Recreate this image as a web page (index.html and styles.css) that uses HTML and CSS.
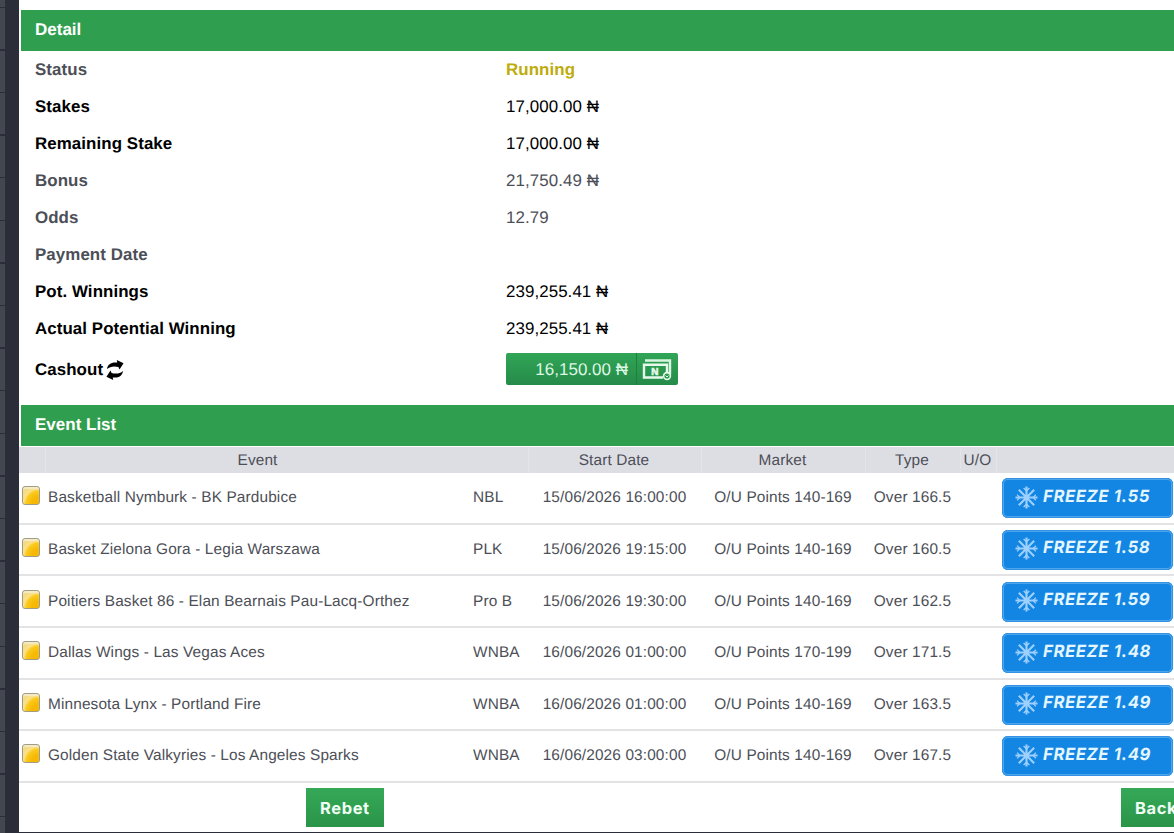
FILE: index.html
```html
<!DOCTYPE html>
<html lang="en">
<head>
    <meta charset="UTF-8">
    <meta name="viewport" content="width=device-width, initial-scale=1.0">
    <link rel="stylesheet" href="styles.css">
    <title>Coupon Detail</title>
</head>
<body>
    <svg class="symbols">
      <symbol id="snow" viewBox="0 0 24 24">
        <g fill="none" stroke="#9dd0ff" stroke-width="2.200">
          <path d="M12 .5v23M.5 12h23M4 4l16 16M20 4L4 20"/>
          <path d="M9 2.200L12 5l3-2.800M9 21.800L12 19l3 2.800M2.200 9L5 12l-2.800 3M21.800 9L19 12l2.800 3" stroke-width="1.400"/>
        </g>
      </symbol>
    </svg>

    <div class="page">
      <div class="gutter"></div>
      <div class="coupon">

        <div class="bar">Detail</div>
        <div class="details">
          <div class="detail muted"><b>Status</b><span class="running">Running</span></div>
          <div class="detail"><b>Stakes</b><span>17,000.00 ₦</span></div>
          <div class="detail"><b>Remaining Stake</b><span>17,000.00 ₦</span></div>
          <div class="detail muted"><b>Bonus</b><span>21,750.49 ₦</span></div>
          <div class="detail muted"><b>Odds</b><span>12.79</span></div>
          <div class="detail muted"><b>Payment Date</b><span></span></div>
          <div class="detail"><b>Pot. Winnings</b><span>239,255.41 ₦</span></div>
          <div class="detail"><b>Actual Potential Winning</b><span>239,255.41 ₦</span></div>
          <div class="detail cashout-row">
            <b>Cashout<svg class="refresh" viewBox="0 0 20 22">
              <path d="M1 10C2 4.500 6 2 12.500 2.800L12 0l7.500 3.500-4.500 7-1.200-2.800C9 6.500 4.500 7 1 10z"/>
              <path d="M19 12c-1 5.500-5 8-11.500 7.200l.5 2.800-7.500-3.500 4.500-7 1.200 2.800C11 15.500 15.500 15 19 12z"/>
            </svg></b>
            <button class="cashout">
              <span class="amount">16,150.00 ₦</span>
              <span class="note">
                <svg width="30" height="23" viewBox="0 0 30 23">
                  <path d="M3 2.500h25v14" fill="none" stroke="#d9f5e1" stroke-width="2.400"/>
                  <path d="M21 19.500H2V6.800h23v8" fill="none" stroke="#e6faec" stroke-width="2.400"/>
                  <text x="9.300" y="16.500">N</text>
                  <circle cx="25" cy="18" r="3.400" fill="#2b9a4b" stroke="#e6faec" stroke-width="1.600"/>
                  <path d="M23.500 17.500l1.500 1.500 1.500-1.500" fill="none" stroke="#e6faec"/>
                </svg>
              </span>
            </button>
          </div>
        </div>

        <div class="bar">Event List</div>
        <div class="event event-head">
          <span></span><span>Event</span><span class="no-line"></span><span>Start Date</span><span>Market</span><span>Type</span><span>U/O</span><span></span>
        </div>
        <div class="event"><i class="state"></i><span>Basketball Nymburk - BK Pardubice</span><span>NBL</span><span>15/06/2026 16:00:00</span><span>O/U Points 140-169</span><span>Over 166.5</span><span></span><button class="freeze"><svg><use href="#snow"/></svg>FREEZE 1.55</button></div>
        <div class="event"><i class="state"></i><span>Basket Zielona Gora - Legia Warszawa</span><span>PLK</span><span>15/06/2026 19:15:00</span><span>O/U Points 140-169</span><span>Over 160.5</span><span></span><button class="freeze"><svg><use href="#snow"/></svg>FREEZE 1.58</button></div>
        <div class="event"><i class="state"></i><span>Poitiers Basket 86 - Elan Bearnais Pau-Lacq-Orthez</span><span>Pro B</span><span>15/06/2026 19:30:00</span><span>O/U Points 140-169</span><span>Over 162.5</span><span></span><button class="freeze"><svg><use href="#snow"/></svg>FREEZE 1.59</button></div>
        <div class="event"><i class="state"></i><span>Dallas Wings - Las Vegas Aces</span><span>WNBA</span><span>16/06/2026 01:00:00</span><span>O/U Points 170-199</span><span>Over 171.5</span><span></span><button class="freeze"><svg><use href="#snow"/></svg>FREEZE 1.48</button></div>
        <div class="event"><i class="state"></i><span>Minnesota Lynx - Portland Fire</span><span>WNBA</span><span>16/06/2026 01:00:00</span><span>O/U Points 140-169</span><span>Over 163.5</span><span></span><button class="freeze"><svg><use href="#snow"/></svg>FREEZE 1.49</button></div>
        <div class="event"><i class="state"></i><span>Golden State Valkyries - Los Angeles Sparks</span><span>WNBA</span><span>16/06/2026 03:00:00</span><span>O/U Points 140-169</span><span>Over 167.5</span><span></span><button class="freeze"><svg><use href="#snow"/></svg>FREEZE 1.49</button></div>

        <div class="actions">
          <button class="action">Rebet</button>
          <button class="action">Back</button>
        </div>
      </div>
    </div>
</body>
</html>
```
FILE: styles.css
```css
*, *:before, *:after {
  margin: 0;
  padding: 0;
  box-sizing: border-box;
}

body {
  height: 833px;
  overflow: hidden;
  background: #2b2e38;
  font-family: "Liberation Sans", Arial, sans-serif;
  text-rendering: geometricPrecision;
  color: #000;
}

button {
  border: 0;
  font-family: inherit;
  text-rendering: inherit;
}

.symbols {
  display: none;
}

.page {
  display: flex;
  width: 1200px;
  height: 833px;
}

/* rows of the page behind the popup */
.gutter {
  flex: 0 0 19px;
  background: linear-gradient(#2b2e38, #2b2e38) 5px 0 no-repeat,
    repeating-linear-gradient(#434750 0 41.100px, #2b2e38 41.100px 42.6px) 0 -34.500px / 100% 900px;
}

.coupon {
  width: 1181px;
  height: 831.500px;
  padding-top: 10px;
  background: #fff;
}

.bar {
  height: 41px;
  margin-left: 2px;
  padding-left: 14px;
  background: #2f9e4e;
  color: #fff;
  font-size: 17px;
  font-weight: bold;
  line-height: 39px;
}

.details {
  height: 354px;
}

.detail {
  display: flex;
  align-items: center;
  height: 37px;
  padding-left: 16px;
  font-size: 16.900px;
  letter-spacing: 0.080px;
}

.detail b {
  width: 471px;
}

.muted {
  color: #4d4f57;
}

.running {
  color: #beab0c;
  font-weight: bold;
}

.cashout-row {
  height: 45px;
}

.refresh {
  width: 18px;
  height: 20px;
  margin-left: 3px;
  vertical-align: -5px;
}

.cashout {
  display: flex;
  width: 172px;
  height: 32px;
  margin-top: -1px;
  border-radius: 2px;
  background: linear-gradient(#31a557, #258b48);
  color: #dcf7e4;
  font-size: 17px;
  line-height: 33px;
}

.amount {
  width: 131px;
  padding-right: 8px;
  border-right: 1px solid #1f7f3e;
  text-align: right;
}

.note {
  display: flex;
  align-items: center;
  padding: 1px 0 0 5px;
}

.note text {
  fill: #e6faec;
  stroke: #e6faec;
  stroke-width: 0.6px;
  font-size: 10px;
  font-weight: bold;
}

.event {
  display: grid;
  grid-template-columns: 26px 426px 57px 173px 164px 95px 36px 185px;
  align-items: center;
  height: 51.630px;
  border-bottom: 2px solid #e3e3e6;
  color: #4d4f57;
  font-size: 15.400px;
  letter-spacing: 0.130px;
  white-space: nowrap;
}

.event span {
  padding-top: 1px;
}

.event span:nth-child(2) {
  padding-left: 3px;
}

.event span:nth-child(4),
.event span:nth-child(5),
.event span:nth-child(6) {
  text-align: center;
}

.event span:nth-child(3) {
  padding-left: 2px;
}

.event-head {
  align-items: stretch;
  height: 26px;
  margin-top: 1px;
  border: 0;
  background: #dddee4;
  line-height: 25px;
  text-align: center;
}

.event-head span {
  padding-right: 2px;
  border-left: 1px solid #e3e4e9;
}

.event.event-head span:nth-child(2) {
  padding-left: 0;
}

.event-head .no-line,
.event-head span:first-child {
  border: 0;
}

.state {
  width: 18px;
  height: 19px;
  margin: 0 0 4px 3px;
  border: 1px solid #a39c85;
  border-radius: 3px;
  background: radial-gradient(circle at 100% 100%, #f6b805 0 30%, #fbca1c 55%, #fbe18a 66%, #efd27a 100%);
  box-shadow: inset 0 2px 1px #f4ecc9;
}

.freeze {
  display: flex;
  align-items: center;
  width: 171px;
  height: 40px;
  margin: 1px 0 0 6px;
  padding: 0 0 3px 13px;
  border-radius: 6px;
  background: #1385e2;
  box-shadow: inset 0 0 0 1px #3293e4, inset 0 0 0 2px #4ea5ec;
  color: #e4f6ff;
  font: italic bold 16.700px Inter, sans-serif;
  letter-spacing: 0.600px;
}

.freeze svg {
  width: 23px;
  height: 23px;
  margin: 1px 5px 0 0;
}

.actions {
  display: flex;
  gap: 737px;
  padding: 5px 0 0 287px;
}

.action {
  flex: 0 0 78px;
  height: 39px;
  padding: 1px 0 0 14px;
  background: linear-gradient(#35a957, #2a9449);
  color: #f0fff4;
  font: bold 16.500px Inter, sans-serif;
  letter-spacing: 0.600px;
  text-align: left;
}
```
